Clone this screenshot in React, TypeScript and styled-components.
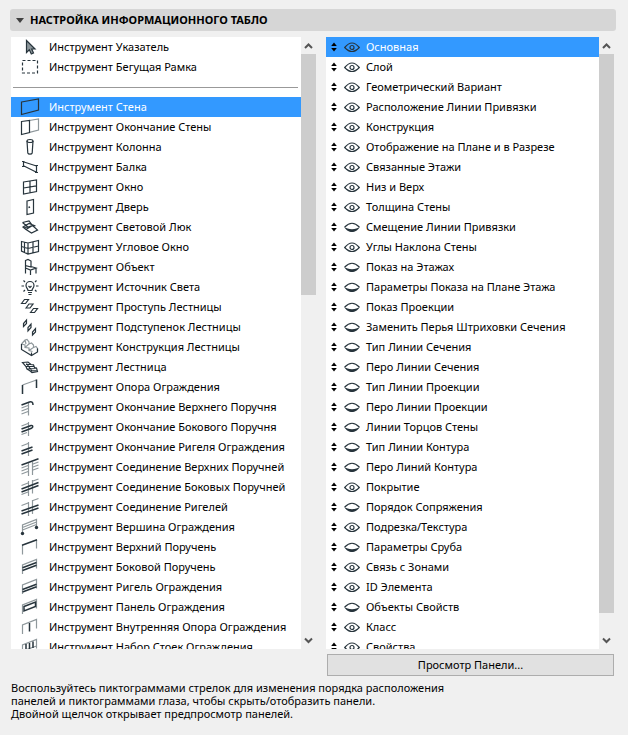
import React, { useRef, useState } from "react";
import styled, { createGlobalStyle, css } from "styled-components";

const DARK = "#27343c";
const GREY = "#8f989c";
const ACCENT = "#3399ff";

const GlobalStyle = createGlobalStyle`
  * { box-sizing: border-box; }
  body {
    margin: 0;
    background: #f0f0f0;
    color: #000;
    font-family: "Noto Sans", "Open Sans", sans-serif;
    font-size: 11px;
  }
`;

const plainButton = css`
  margin: 0;
  padding: 0;
  border: 0;
  background: none;
  color: inherit;
  font: inherit;
  text-align: left;
  cursor: pointer;
`;

const Page = styled.main`
  display: flex;
  flex-direction: column;
  height: 100vh;
  padding: 9px 12px 15px 10px;
`;

const Heading = styled.h1`
  margin: 0 0 6px;
  font-size: 11px;
  line-height: 22px;
`;

const HeadingToggle = styled.button`
  ${plainButton}
  display: flex;
  align-items: center;
  gap: 6px;
  width: 100%;
  height: 22px;
  padding: 0 6px;
  border-radius: 3px;
  background: #d6d6d6;
`;

const Columns = styled.div`
  display: grid;
  flex: 1;
  min-height: 0;
  grid-template-columns: 305fr 288fr;
  grid-template-rows: minmax(0, 1fr) 22px;
  gap: 5px 10px;
  padding: 0 2px 0 1px;
`;

const Panel = styled.section`
  display: flex;
  min-width: 0;
  min-height: 0;
`;

const List = styled.ul`
  flex: 1;
  min-width: 0;
  margin: 0;
  padding: 0;
  overflow: hidden;
  background: #fff;
  list-style: none;
`;

const Row = styled.li<{ $selected: boolean }>`
  display: flex;
  align-items: center;
  height: 20px;
  background: ${(p) => (p.$selected ? ACCENT : "transparent")};
  color: ${(p) => (p.$selected ? "#fff" : "#000")};
`;

const ToolButton = styled.button`
  ${plainButton}
  display: flex;
  align-items: center;
  gap: 9px;
  width: 100%;
  height: 20px;
  padding-left: 9px;
  line-height: 20px;
  white-space: nowrap;
`;

const Divider = styled.li`
  display: flex;
  align-items: center;
  height: 20px;
  padding: 0 3px 0 2px;

  hr {
    flex: 1;
    margin: 0;
    border: 0;
    border-top: 1px solid #999;
  }
`;

const IconButton = styled.button<{ $width: number }>`
  ${plainButton}
  display: flex;
  align-items: center;
  justify-content: center;
  flex: none;
  width: ${(p) => p.$width}px;
  height: 20px;
`;

const PanelName = styled.button`
  ${plainButton}
  flex: 1;
  height: 20px;
  padding-left: 4px;
  line-height: 20px;
  white-space: nowrap;
`;

const Scrollbar = styled.div`
  display: flex;
  flex: none;
  flex-direction: column;
  width: 15px;
  background: #f0f0f0;
`;

const ScrollButton = styled.button`
  ${plainButton}
  display: flex;
  align-items: center;
  justify-content: center;
  width: 15px;
  height: 17px;
`;

const Thumb = styled.div<{ $size: number }>`
  flex: ${(p) => p.$size} 0 0;
  background: #cdcdcd;
`;

const Track = styled.div<{ $size: number }>`
  flex: ${(p) => p.$size} 0 0;
`;

const PreviewButton = styled.button`
  grid-column: 2;
  margin-left: 1px;
  padding: 0;
  border: 1px solid #adadad;
  background: #e1e1e1;
  color: #000;
  font: inherit;
  line-height: 20px;
  cursor: pointer;
`;

const Help = styled.p`
  max-width: 450px;
  margin: 5px 0 0;
  padding-left: 1px;
  line-height: 13px;
`;

const Glyph = styled.svg`
  display: block;
  flex: none;
  fill: none;
  stroke: ${DARK};
  stroke-width: 1.2;

  .g { stroke: ${GREY}; }
  .b { stroke-width: 1.5; }
  .f { fill: ${DARK}; stroke: none; }
`;

const icons: Record<string, React.ReactNode> = {
  pointer: <path d="M6.5 3.500V15.500L9.300 12.800 11.300 17 13.500 16 11.700 12H15z" fill="#8b959a" />,
  marquee: <path d="M2.500 3.500h15v12.500h-15z" strokeDasharray="3 2" />,
  wall: <path d="M1.500 5 18.500 2v11L1.500 17.500z" />,
  wallEnd: (
    <>
      <path className="g" d="M9.500 3.500 18.500 2v11l-9 2.300" />
      <path d="M1.500 4.500 9.500 3.500v12L1.500 17.500z" />
    </>
  ),
  column: (
    <>
      <ellipse cx="10" cy="4" rx="3" ry="1.500" />
      <path d="M7 4l.8 12c.5 1.500 3.900 1.500 4.400 0L13 4" />
    </>
  ),
  beam: <path d="M2 4.500h2.500M2 9.500h2.500M3.500 4.500v5M4 5l12.500 4M4 9l12 6M15 8.500h3M15 15.500h3M16.500 8.500v7" />,
  window: <path d="M3.500 5 16.500 3v11.500L3.500 17zM10 4v12M3.500 11l13-2.200" />,
  door: (
    <>
      <path d="M7 4 13.500 2.500V16L7 17.500z" />
      <path className="b" d="M8.500 10.500 10 10" />
    </>
  ),
  skylight: <path d="M2.500 5.500 9 4l3.500 4.500L17.500 13l-6 3L6 12.500l6.500-4M2.500 5.500 8 10l-3.500.5M8 10l4.500-1.500M6 12.500 3 10 9 6.500l6.500 2.500" />,
  cornerWindow: <path d="M1.500 4.500 8 6l10.500-2.500v11L8 17l-6.500-3zM8 6v11M4.500 5.500v10M13 5v11M1.500 9.500 8 11.500 18.500 9" />,
  chair: <path d="M5.500 3.500 8 2.500l3 1.500v6l-5.500-1.500zM5.500 8.500v8M5.500 11l5 2 5.500-2-5-1.500M10.500 13v5M16 11v5.500" />,
  bulb: (
    <>
      <path d="M8 13.500c0-2-2-2.500-2-5a4 4 0 0 1 8 0c0 2.500-2 3-2 5zM8 15.500h4M8.500 17.500h3M8.500 9l1.500 1.500L11.500 9" />
      <path d="M1.500 9h2.500M16 9h2.500M3.500 3.500 5 5M16.500 3.500 15 5M3.500 14.500 5 13M16.500 14.500 15 13" />
    </>
  ),
  treads: <path d="M1.500 6.500 4.500 2.500h4L5.500 6.500zM6 11 9 7h4L10 11zM10.500 15.500 13.500 11.500h4l-3 4z" />,
  risers: <path d="M3.500 9.500v-3l3-3.500v3.500zM8 14v-3.500L11 7v3.500zM12.500 18v-3l3-3.500v3.500z" />,
  stairBody: (
    <>
      <path
        className="g"
        d="M1.500 7 5 3l2-.5L9 5v2L5 10.500M9 7l2.500-1 2 2v2.500L9 13.500M13.500 10.500 16 9.500l1.500 2v3M5 3l1 4M1.500 7 5 8v2.500l4 .5v2.500l3.500 1"
      />
      <path d="M1.500 7v5.500L11.500 18.500 17.500 15v-3.500M11.500 18.500v-3" />
    </>
  ),
  stair: (
    <path d="M2.500 5.500 8 5l3 2.500 2.500.3 1 2.700 2 .5L17.500 14.500 12 15.500 9.500 13.500 7 12 6 9.500zM6 7.500h5M6 9.500l8-.2M7.500 12l8-.5M10 14l6.500-.5M6.500 6.500 12 14" />
  ),
  post: (
    <>
      <path className="g" d="M2.500 8 16.500 3" />
      <path className="b" d="M2.500 8v9M16.500 2.500V11" />
    </>
  ),
  topEnd: (
    <>
      <path className="g" d="M8.500 6v12.500M1.500 11 8 8.500M1.500 14 8 11.500M1.500 17 8 14.500" />
      <path className="b" d="M1.500 8 9.500 5c2-.6 3.500 0 3.500 3" />
    </>
  ),
  sideEnd: (
    <>
      <path className="g" d="M8.500 5v14M1.500 9 8 6.500M1.500 17.500 7 15.500" />
      <path className="b" d="M1.500 12 11 8.500c2-.5 2.500 2 .5 2.700L1.500 15" />
    </>
  ),
  railEnd: (
    <>
      <path className="g" d="M8.500 5v14M1.500 9 8 6.500" />
      <path className="b" d="M1.500 14 12.500 10M1.500 17 12.500 13" />
    </>
  ),
  topJoint: (
    <>
      <path className="g" d="M8.500 6v13M12.500 5v13M1.500 11 8 8.500M1.500 14 8 11.500M1.500 17 8 14.500M13 7l5.500-2M13 10l5.500-2M13 13l5.500-2" />
      <path className="b" d="M1.500 8 18.500 1.800" />
    </>
  ),
  sideJoint: (
    <>
      <path className="g" d="M8.500 4v15M12.500 3v13.500M1.500 8.500 8 6M13 4l5.500-2M1.500 17.500 8 15" />
      <path className="b" d="M1.500 12 18.500 5.500M1.500 15 18.500 8.500" />
    </>
  ),
  railJoint: (
    <>
      <path className="g" d="M8.500 5v14M12.500 3v14M1.500 8.500 8 6M13 3.500l5.500-2" />
      <path className="b" d="M1.500 14 18.500 8M1.500 17 18.500 11" />
    </>
  ),
  vertex: (
    <>
      <path className="g" d="M2.500 16V8l14-5.500v8M2.500 10.500l14-5.500M2.500 13l14-5.500" />
      <circle className="f" cx="2.500" cy="16.500" r="1.700" />
      <circle className="f" cx="16.500" cy="10.500" r="1.700" />
    </>
  ),
  top: (
    <>
      <path className="g" d="M2.500 8v9.500M16.500 3v8.500" />
      <path className="b" d="M2 8.200 17 2.700" />
    </>
  ),
  side: (
    <>
      <path className="g" d="M2.500 17V8l14-5.500v9" />
      <path className="b" d="M2.500 10.700l14-5.200M2.500 13.500l14-5.200" />
    </>
  ),
  rail: (
    <>
      <path className="g" d="M2.500 17V8l14-5.500v9" />
      <path className="b" d="M2.500 12.500l14-5.200M2.500 15l14-5.200" />
    </>
  ),
  panel: (
    <>
      <path className="g" d="M2.500 17V8l14-5.500v9" />
      <path className="b" d="M4 9.500 15.500 5v4.500L4 14z" />
    </>
  ),
  innerPost: (
    <>
      <path className="g" d="M2.500 17V8l14-5.500v9" />
      <path className="b" d="M9.500 6v8.500" />
    </>
  ),
  postSet: (
    <>
      <path className="g" d="M2.500 17V8l14-5.500v9M2.500 14l14-5" />
      <path className="b" d="M6 7v7M9.500 6v7M13 4.500v6.500" />
    </>
  ),
};

const tools: [string, string][] = [
  ["pointer", "Указатель"],
  ["marquee", "Бегущая Рамка"],
  ["wall", "Стена"],
  ["wallEnd", "Окончание Стены"],
  ["column", "Колонна"],
  ["beam", "Балка"],
  ["window", "Окно"],
  ["door", "Дверь"],
  ["skylight", "Световой Люк"],
  ["cornerWindow", "Угловое Окно"],
  ["chair", "Объект"],
  ["bulb", "Источник Света"],
  ["treads", "Проступь Лестницы"],
  ["risers", "Подступенок Лестницы"],
  ["stairBody", "Конструкция Лестницы"],
  ["stair", "Лестница"],
  ["post", "Опора Ограждения"],
  ["topEnd", "Окончание Верхнего Поручня"],
  ["sideEnd", "Окончание Бокового Поручня"],
  ["railEnd", "Окончание Ригеля Ограждения"],
  ["topJoint", "Соединение Верхних Поручней"],
  ["sideJoint", "Соединение Боковых Поручней"],
  ["railJoint", "Соединение Ригелей"],
  ["vertex", "Вершина Ограждения"],
  ["top", "Верхний Поручень"],
  ["side", "Боковой Поручень"],
  ["rail", "Ригель Ограждения"],
  ["panel", "Панель Ограждения"],
  ["innerPost", "Внутренняя Опора Ограждения"],
  ["postSet", "Набор Стоек Ограждения"],
];

const initialPanels: { name: string; visible: boolean }[] = [
  ["Основная", true],
  ["Слой", true],
  ["Геометрический Вариант", true],
  ["Расположение Линии Привязки", true],
  ["Конструкция", true],
  ["Отображение на Плане и в Разрезе", true],
  ["Связанные Этажи", true],
  ["Низ и Верх", true],
  ["Толщина Стены", true],
  ["Смещение Линии Привязки", false],
  ["Углы Наклона Стены", true],
  ["Показ на Этажах", false],
  ["Параметры Показа на Плане Этажа", false],
  ["Показ Проекции", false],
  ["Заменить Перья Штриховки Сечения", false],
  ["Тип Линии Сечения", false],
  ["Перо Линии Сечения", false],
  ["Тип Линии Проекции", false],
  ["Перо Линии Проекции", false],
  ["Линии Торцов Стены", false],
  ["Тип Линии Контура", false],
  ["Перо Линий Контура", false],
  ["Покрытие", true],
  ["Порядок Сопряжения", false],
  ["Подрезка/Текстура", true],
  ["Параметры Сруба", false],
  ["Связь с Зонами", true],
  ["ID Элемента", true],
  ["Объекты Свойств", false],
  ["Класс", true],
  ["Свойства", true],
].map(([name, visible]) => ({ name: name as string, visible: visible as boolean }));

function ToolIcon({ name }: { name: string }) {
  return (
    <Glyph width="20" height="20" viewBox="0 0 20 20" aria-hidden="true">
      {icons[name]}
    </Glyph>
  );
}

function EyeIcon({ open }: { open: boolean }) {
  return (
    <Glyph width="16" height="12" viewBox="0 0 16 12" aria-hidden="true">
      {open ? (
        <>
          <path d="M.7 6.500Q8-2.500 15.300 6.500 8 14.500.7 6.500z" />
          <circle cx="8" cy="6.500" r="2" />
        </>
      ) : (
        <>
          <path d="M.7 6Q8-1.500 15.300 6" />
          <path className="f" d="M0 5.500C4 9 12 9 16 5.500 14 9.500 11 11 8 11S2 9.500 0 5.500z" />
        </>
      )}
    </Glyph>
  );
}

function MoveIcon() {
  return (
    <svg width="6" height="10" viewBox="0 0 6 10" aria-hidden="true">
      <path d="M3 .5 5.800 4H.2zM3 9.500 5.800 6H.2z" />
    </svg>
  );
}

function ChevronIcon({ up = false }: { up?: boolean }) {
  return (
    <svg width="9" height="7" viewBox="0 0 9 7" fill="none" stroke="#555" strokeWidth="2" aria-hidden="true">
      <path d={up ? "M1 6 4.500 2.500 8 6" : "M1 1.500 4.500 5 8 1.500"} />
    </svg>
  );
}

interface ScrollPanelProps {
  label: string;
  thumb: number;
  rest: number;
  children: React.ReactNode;
}

function ScrollPanel({ label, thumb, rest, children }: ScrollPanelProps) {
  const list = useRef<HTMLUListElement>(null);
  const scroll = (top: number) => list.current?.scrollBy({ top });
  return (
    <Panel>
      <List ref={list} aria-label={label}>
        {children}
      </List>
      <Scrollbar>
        <ScrollButton type="button" aria-label="Вверх" onClick={() => scroll(-20)}>
          <ChevronIcon up />
        </ScrollButton>
        <Thumb $size={thumb} />
        <Track $size={rest} />
        <ScrollButton type="button" aria-label="Вниз" onClick={() => scroll(20)}>
          <ChevronIcon />
        </ScrollButton>
      </Scrollbar>
    </Panel>
  );
}

export default function App() {
  const [tool, setTool] = useState("wall");
  const [panels, setPanels] = useState(initialPanels);
  const [current, setCurrent] = useState("Основная");

  const toggle = (name: string) =>
    setPanels(panels.map((p) => (p.name === name ? { ...p, visible: !p.visible } : p)));

  const moveDown = (index: number) => {
    if (index === panels.length - 1) return;
    const next = [...panels];
    [next[index], next[index + 1]] = [next[index + 1], next[index]];
    setPanels(next);
  };

  return (
    <Page>
      <GlobalStyle />
      <Heading>
        <HeadingToggle type="button" aria-expanded="true">
          <svg width="8" height="5" viewBox="0 0 8 5" fill="#404040" aria-hidden="true">
            <path d="M0 0h8L4 5z" />
          </svg>
          НАСТРОЙКА ИНФОРМАЦИОННОГО ТАБЛО
        </HeadingToggle>
      </Heading>

      <Columns>
        <ScrollPanel label="Инструменты" thumb={241} rest={337}>
          {tools.map(([id, name]) => (
            <React.Fragment key={id}>
              {id === "wall" && (
                <Divider>
                  <hr />
                </Divider>
              )}
              <Row $selected={tool === id}>
                <ToolButton type="button" aria-pressed={tool === id} onClick={() => setTool(id)}>
                  <ToolIcon name={id} />
                  Инструмент {name}
                </ToolButton>
              </Row>
            </React.Fragment>
          ))}
        </ScrollPanel>

        <ScrollPanel label="Панели" thumb={559} rest={19}>
          {panels.map(({ name, visible }, index) => (
            <Row key={name} $selected={current === name}>
              <IconButton $width={16} type="button" aria-label="Переместить" onClick={() => moveDown(index)}>
                <MoveIcon />
              </IconButton>
              <IconButton
                $width={20}
                type="button"
                aria-label="Показать панель"
                aria-pressed={visible}
                onClick={() => toggle(name)}
              >
                <EyeIcon open={visible} />
              </IconButton>
              <PanelName type="button" onClick={() => setCurrent(name)}>
                {name}
              </PanelName>
            </Row>
          ))}
        </ScrollPanel>

        <PreviewButton type="button">Просмотр Панели...</PreviewButton>
      </Columns>

      <Help>
        Воспользуйтесь пиктограммами стрелок для изменения порядка расположения
        <br />
        панелей и пиктограммами глаза, чтобы скрыть/отобразить панели.
        <br />
        Двойной щелчок открывает предпросмотр панелей.
      </Help>
    </Page>
  );
}
